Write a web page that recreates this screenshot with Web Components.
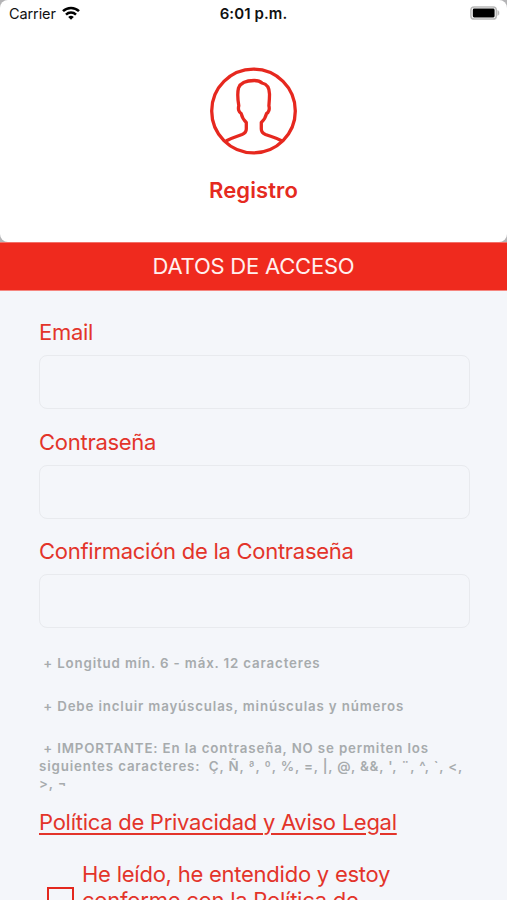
<!DOCTYPE html>
<html lang="es">
<head>
<meta charset="utf-8">
<title>Registro</title>
<style>
  html, body {
    margin: 0;
    height: 900px;
    overflow: hidden;
  }
  body {
    font-family: Inter, "Liberation Sans", sans-serif;
    background: #f4f6fa;
    color: #e3342a;
  }
</style>
</head>
<body>
<registro-page></registro-page>

<script>
class StatusBar extends HTMLElement {
  constructor() {
    super();
    this.attachShadow({ mode: "open" });
    this.shadowRoot.innerHTML = `
    <style>
      :host {
        display: grid;
        grid-template-columns: 1fr auto 1fr;
        align-items: center;
        height: 28px;
        padding: 0 7px 0 9px;
        box-sizing: border-box;
        color: #111;
        font-size: 14.5px;
        line-height: 20px;
      }
      .carrier {
        display: flex;
        align-items: center;
        gap: 6px;
        letter-spacing: -0.1px;
      }
      .time {
        margin-left: -2px;
        font-size: 15px;
        font-weight: 600;
        letter-spacing: 0.1px;
      }
      .battery {
        justify-self: end;
      }
      svg {
        display: block;
        margin-top: -2px;
      }
    </style>
    <div class="carrier">
      <span>Carrier</span>
      <svg width="18" height="14" viewBox="0 0 18 14" fill="none" stroke="#000" stroke-width="2.5">
        <path d="M1 5.200a11.300 11.300 0 0 1 16 0"/>
        <path d="M4 8.600a7.200 7.200 0 0 1 10 0"/>
        <path d="M9 13.800L6.200 11a4 4 0 0 1 5.600 0z" fill="#000" stroke="none"/>
      </svg>
    </div>
    <span class="time">6:01 p.m.</span>
    <svg class="battery" width="30" height="14" viewBox="0 0 30 14">
      <rect x=".9" y=".9" width="25.4" height="12.2" rx="3.2" fill="#fff" stroke="#b9b9b9" stroke-width="1.5"/>
      <rect x="2.8" y="2.6" width="21.8" height="8.8" rx="1.3" fill="#000"/>
      <path d="M27.8 4.6c1.6.6 1.6 4.200 0 4.800z" fill="#b9b9b9" stroke="#b9b9b9" stroke-width=".6"/>
    </svg>
    `;
  }
}

class ProfileHeader extends HTMLElement {
  constructor() {
    super();
    this.attachShadow({ mode: "open" });
    this.shadowRoot.innerHTML = `
    <style>
      :host {
        display: block;
        height: 242px;
        background: #b4b4b6;
      }
      .card {
        display: flex;
        flex-direction: column;
        align-items: center;
        height: 242px;
        background: #fff;
        border-radius: 8px;
      }
      status-bar {
        width: 100%;
      }
      svg {
        display: block;
        margin-top: 39px;
      }
      h1 {
        margin: 21px 0 0;
        font-size: 22px;
        line-height: 28px;
        font-weight: 600;
        letter-spacing: 0.1px;
        color: #e52a20;
      }
    </style>
    <div class="card">
      <status-bar></status-bar>
      <svg width="88" height="88" viewBox="0 0 88 88" fill="none" stroke="#e6281f" stroke-width="3.3" stroke-linejoin="round">
        <circle cx="43.500" cy="44" r="41.800"/>
        <path d="M16 74C22 70.500 27 69.500 32 67.500C35.500 66 36.300 64.500 36.300 62V55.500C33.500 53 32 50 31.200 46.500C29 45.500 27.800 42 28.800 38.800C28 34 27.500 25 28.500 21C31 14.500 39 13.500 44.200 13.500C48.500 13.500 50.500 14.500 52 16C57.500 17.200 59.700 22 59.500 28C59.500 32 59.100 36 58.900 38.800C59.800 42 58.800 45.500 56.500 46.500C55.800 50 54 53 51.300 55.500V62C51.300 64.500 52 66 55.500 67.500C60.500 69.500 66 70.500 72 74"/>
      </svg>
      <h1><slot></slot></h1>
    </div>
    `;
  }
}

class SectionBar extends HTMLElement {
  constructor() {
    super();
    this.attachShadow({ mode: "open" });
    this.shadowRoot.innerHTML = `
    <style>
      :host {
        display: flex;
        align-items: center;
        justify-content: center;
        height: 49px;
        padding-bottom: 2px;
        box-sizing: border-box;
        background: #ef2a1e;
        border-top: 1px solid #f27068;
        border-bottom: 1px solid #f5867f;
        color: #fff0ee;
        font-size: 22px;
        line-height: 28px;
        letter-spacing: -0.22px;
      }
    </style>
    <slot></slot>
    `;
  }
}

class FormField extends HTMLElement {
  constructor() {
    super();
    this.attachShadow({ mode: "open" });
    this.shadowRoot.innerHTML = `
    <style>
      :host {
        display: block;
        font-size: 22px;
        line-height: 28px;
        letter-spacing: -0.27px;
      }
      label {
        display: block;
        margin-bottom: 9px;
      }
      input {
        display: block;
        width: 431px;
        height: 54px;
        margin: 0 0 0 -0.5px;
        padding: 0 14px;
        box-sizing: border-box;
        border: 1px solid #e8eaee;
        border-radius: 8px;
        background: transparent;
        font: inherit;
        color: inherit;
        outline: none;
      }
    </style>
    <label for="field"><slot></slot></label>
    <input id="field">
    `;
    this.shadowRoot.querySelector("input").type = this.getAttribute("type") || "text";
  }
}

class PasswordHint extends HTMLElement {
  constructor() {
    super();
    this.attachShadow({ mode: "open" });
    this.shadowRoot.innerHTML = `
    <style>
      :host {
        display: block;
        color: #a7abad;
        font-size: 13.3px;
        font-weight: 600;
        line-height: 17.5px;
        letter-spacing: 0.85px;
      }
      div {
        white-space: pre;
      }
    </style>
    <div><slot></slot></div>
    `;
  }
}

class CheckOption extends HTMLElement {
  constructor() {
    super();
    this.attachShadow({ mode: "open" });
    this.shadowRoot.innerHTML = `
    <style>
      :host {
        display: flex;
        gap: 8px;
        padding-left: 8px;
        font-size: 22px;
        line-height: 26px;
        letter-spacing: -0.24px;
      }
      .box {
        flex: none;
        width: 27px;
        height: 27px;
        margin-top: 26px;
        box-sizing: border-box;
        border: 2px solid #e3281e;
        cursor: pointer;
      }
      :host([checked]) .box {
        background: #e3281e;
      }
    </style>
    <div class="box"></div>
    <div class="text"><slot></slot></div>
    `;
    this.shadowRoot.querySelector(".box").addEventListener("click", () => {
      this.toggleAttribute("checked");
    });
  }
}

class RegistroPage extends HTMLElement {
  constructor() {
    super();
    this.attachShadow({ mode: "open" });
    this.shadowRoot.innerHTML = `
    <style>
      :host {
        display: block;
        height: 900px;
        overflow: hidden;
      }
      main {
        display: flex;
        flex-direction: column;
        padding: 27px 38px 0 39px;
      }
      .fields {
        display: grid;
        gap: 18.5px;
      }
      .hints {
        display: grid;
        gap: 25px;
        margin-top: 27px;
      }
      .legal {
        align-self: flex-start;
        margin-top: 15px;
        color: inherit;
        font-size: 22px;
        line-height: 28px;
        letter-spacing: -0.27px;
        text-decoration-thickness: 2px;
        text-underline-offset: 3px;
      }
      check-option {
        margin-top: 25px;
      }
    </style>
    <profile-header>Registro</profile-header>
    <section-bar>DATOS DE ACCESO</section-bar>
    <main>
      <div class="fields">
        <form-field type="email">Email</form-field>
        <form-field type="password">Contraseña</form-field>
        <form-field type="password">Confirmación de la Contraseña</form-field>
      </div>
      <div class="hints">
        <password-hint> + Longitud mín. 6 - máx. 12 caracteres</password-hint>
        <password-hint> + Debe incluir mayúsculas, minúsculas y números</password-hint>
        <password-hint> + IMPORTANTE: En la contraseña, NO se permiten los<br>siguientes caracteres:  Ç, Ñ, ª, º, %, =, |, @, &amp;&amp;, ', ¨, ^, \`, &lt;,<br>&gt;, ¬</password-hint>
      </div>
      <a class="legal" href="#">Política de Privacidad y Aviso Legal</a>
      <check-option>He leído, he entendido y estoy<br>conforme con la Política de</check-option>
    </main>
    `;
  }
}

customElements.define("status-bar", StatusBar);
customElements.define("profile-header", ProfileHeader);
customElements.define("section-bar", SectionBar);
customElements.define("form-field", FormField);
customElements.define("password-hint", PasswordHint);
customElements.define("check-option", CheckOption);
customElements.define("registro-page", RegistroPage);
</script>
</body>
</html>
